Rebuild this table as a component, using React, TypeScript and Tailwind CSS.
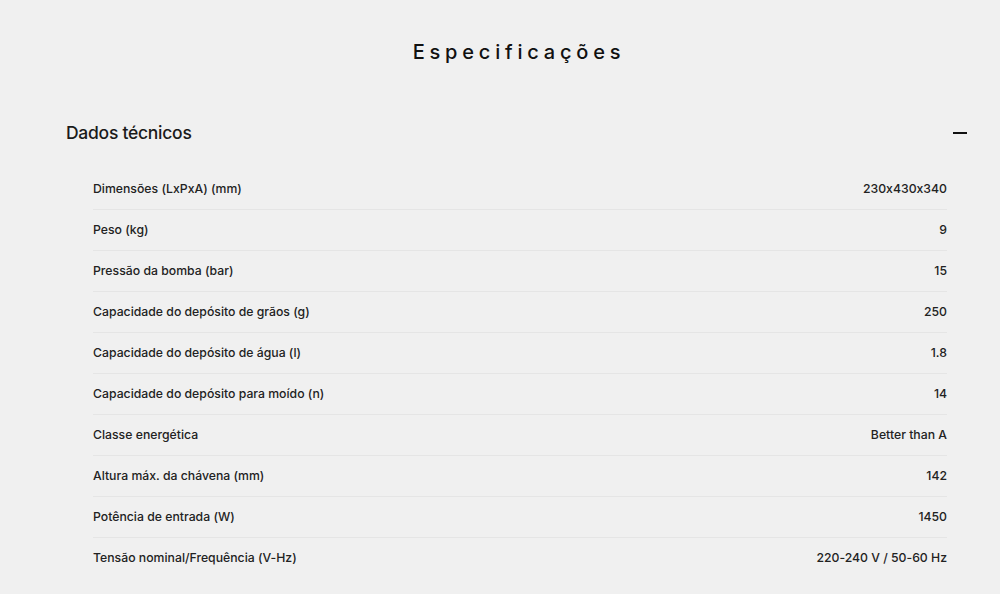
import React from 'react'

const specs: Array<[string, string]> = [
  ['Dimensões (LxPxA) (mm)', '230x430x340'],
  ['Peso (kg)', '9'],
  ['Pressão da bomba (bar)', '15'],
  ['Capacidade do depósito de grãos (g)', '250'],
  ['Capacidade do depósito de água (l)', '1.8'],
  ['Capacidade do depósito para moído (n)', '14'],
  ['Classe energética', 'Better than A'],
  ['Altura máx. da chávena (mm)', '142'],
  ['Potência de entrada (W)', '1450'],
  ['Tensão nominal/Frequência (V-Hz)', '220-240 V / 50-60 Hz'],
]

export default function App() {
  return (
    <div className="min-h-[594px] w-full bg-[#f0f0f0] text-[#1a1a1a] font-['Inter',sans-serif] [font-feature-settings:'calt'_0]">
      {/* Title */}
      <h2 className="pt-[38px] text-center text-[20px] leading-[28px] font-medium text-[#111] tracking-[0.24em] pl-[38px]">
        Especificações
      </h2>

      {/* Accordion section */}
      <div className="mt-[55px] pl-[66px] pr-[33px]">
        <div className="flex items-center justify-between h-[24px]">
          <h3 className="text-[17.5px] font-medium tracking-[-0.015em]">Dados técnicos</h3>
          <span className="block w-[14px] h-[2px] bg-[#111]" />
        </div>

        <div className="mt-[24px] ml-[27px] mr-[20px]">
          {specs.map(([label, value], i) => (
            <div
              key={label}
              className={
                'flex items-center justify-between h-[41px] text-[12.25px] font-medium text-[#222] ' +
                (i < specs.length - 1 ? 'border-b border-[#e5e5e5]' : '')
              }
            >
              <span>{label}</span>
              <span>{value}</span>
            </div>
          ))}
        </div>
      </div>
    </div>
  )
}
